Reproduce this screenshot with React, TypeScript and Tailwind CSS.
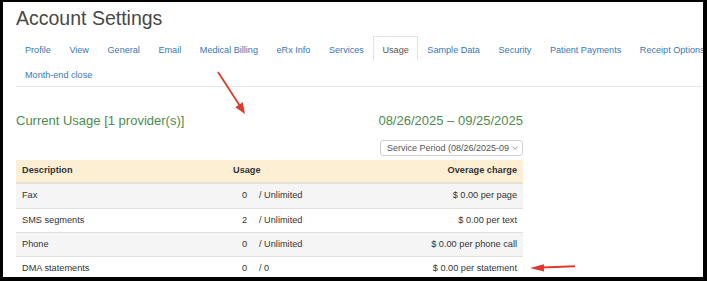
const tabs = [
  "Profile",
  "View",
  "General",
  "Email",
  "Medical Billing",
  "eRx Info",
  "Services",
  "Usage",
  "Sample Data",
  "Security",
  "Patient Payments",
  "Receipt Options",
  "Month-end close",
];

const rows = [
  { name: "Fax", used: "0", limit: "/ Unlimited", charge: "$ 0.00 per page" },
  { name: "SMS segments", used: "2", limit: "/ Unlimited", charge: "$ 0.00 per text" },
  { name: "Phone", used: "0", limit: "/ Unlimited", charge: "$ 0.00 per phone call" },
  { name: "DMA statements", used: "0", limit: "/ 0", charge: "$ 0.00 per statement" },
];

export default function App() {
  return (
    <div className="relative w-[707px] h-[281px] bg-black pt-[2px] pl-[3px] pr-[4px] pb-[4px] font-['Liberation_Sans',Arial,sans-serif]">
      <div className="h-full bg-white overflow-hidden pl-[13px] pt-[4px]">
        {/* Page title */}
        <h1 className="text-[19.5px] leading-[24px] font-light text-[#484848]">Account Settings</h1>

        {/* Tabs */}
        <nav className="mt-[6px] w-[740px] flex flex-wrap border-b border-[#e6e6e6]">
          {tabs.map((t) => {
            const active = t === "Usage";
            return (
              <span
                key={t}
                className={
                  active
                    ? "h-[25px] pt-[7px] pb-[3px] px-[8px] mr-[0.6px] text-[9.1px] leading-[13px] border border-[#e2e2e2] border-b-transparent bg-white text-[#555]"
                    : "h-[25px] pt-[7px] pb-[3px] px-[8px] mr-[0.6px] text-[9.1px] leading-[13px] border border-transparent text-[#3877b6]"
                }
              >
                {t}
              </span>
            );
          })}
        </nav>

        <div className="w-[507px]">
          {/* Heading */}
          <div className="mt-[26px] flex items-baseline justify-between text-[13px] leading-[16px] text-[#4d8b4d]">
            <span>Current Usage [1 provider(s)]</span>
            <span>08/26/2025 – 09/25/2025</span>
          </div>

          {/* Period select */}
          <div className="mt-[11px] flex justify-end">
            <div className="w-[143px] h-[16px] flex items-center border border-[#cfcfcf] rounded-[3px] bg-white pl-[6px] pr-[3px]">
              <span className="flex-1 overflow-hidden whitespace-nowrap text-[9px] leading-[14px] text-[#555]">
                Service Period (08/26/2025-09/25/2025)
              </span>
              <svg width="6" height="4" viewBox="0 0 6 4" className="ml-[3px] mr-[1px]">
                <path d="M0.5 0.8 L3 3.2 L5.5 0.8" fill="none" stroke="#888" strokeWidth="0.9" />
              </svg>
            </div>
          </div>

          {/* Usage table */}
          <div className="mt-[4px] text-[9.2px] text-[#333]">
            <div className="grid grid-cols-[211px_26px_1fr_auto] h-[24px] items-center bg-[#fcefd4] border-b-2 border-[#e6e2d6] font-bold">
              <span className="px-[6px]">Description</span>
              <span className="col-span-2 px-[6px]">Usage</span>
              <span className="px-[6px] text-right">Overage charge</span>
            </div>
            {rows.map((r, i) => (
              <div
                key={r.name}
                className={`grid grid-cols-[211px_26px_1fr_auto] h-[24px] items-center ${
                  i > 0 ? "border-t border-[#e0e0e0]" : ""
                } ${i % 2 === 0 ? "bg-[#f5f5f5]" : "bg-white"}`}
              >
                <span className="px-[6px]">{r.name}</span>
                <span className="pr-[6px] text-right">{r.used}</span>
                <span className="pl-[6px]">{r.limit}</span>
                <span className="px-[6px] text-right">{r.charge}</span>
              </div>
            ))}
          </div>
        </div>
      </div>

      {/* Annotation arrows */}
      <svg className="absolute inset-0 pointer-events-none" width="707" height="281" viewBox="0 0 707 281">
        <line x1="218" y1="72" x2="240" y2="106" stroke="#e23a2a" strokeWidth="1.8" />
        <polygon points="245,114 235.3,107.2 242.8,102.3" fill="#e23a2a" />
        <line x1="542" y1="267.5" x2="575" y2="266.3" stroke="#e23a2a" strokeWidth="2" />
        <polygon points="530,268 544,264.2 544,271.4" fill="#e23a2a" />
      </svg>
    </div>
  );
}
